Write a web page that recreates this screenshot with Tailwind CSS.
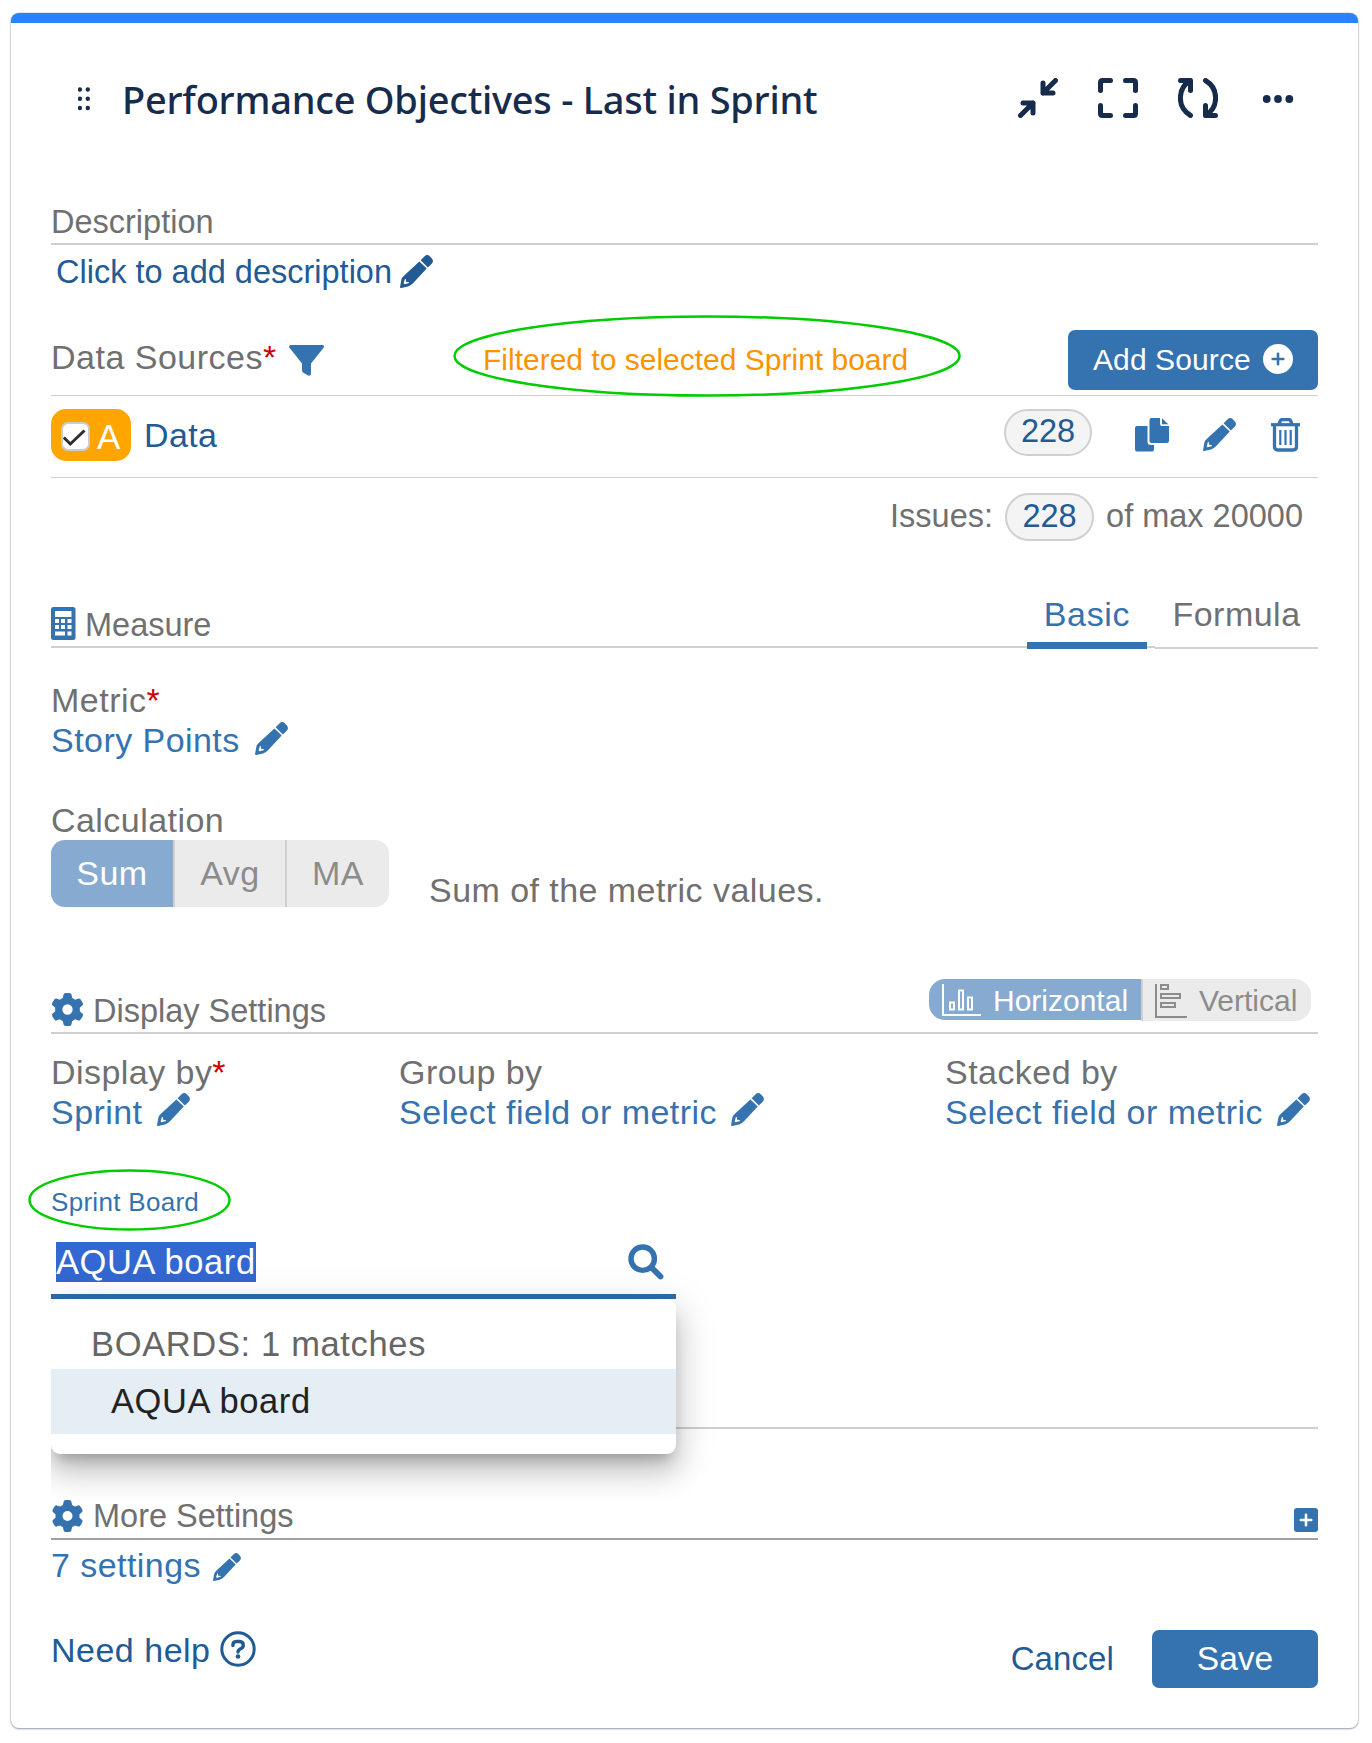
<!DOCTYPE html>
<html lang="en">

<head>
  <meta charset="UTF-8" />
  <meta name="viewport" content="width=device-width, initial-scale=1.0" />
  <title>Performance Objectives - Last in Sprint</title>
  <script src="https://cdn.jsdelivr.net/npm/@tailwindcss/browser@4"></script>
</head>

<body class="bg-white min-h-screen">
  <!-- Shared icons -->
  <svg class="hidden">
    <symbol id="pencil" viewBox="0 0 33 33">
      <path d="M20.6 5.2 24.4 1.4Q27.2-1.2 30 1.4L31.7 3.2Q34.2 6 31.7 8.8L27.9 12.5Z" />
      <path fill-rule="evenodd" d="M19.400 6.400 26.700 13.600 13 28.300Q10.500 30.700 8 31.400L1.2 32.9Q-.2 33.1.1 31.8L1.3 25Q2 22.400 4.200 20.600ZM5 23.8 3.6 28.6 4.6 29.3 9.2 27.9 8.4 26.9 6 26.8 6 24.4Z" />
    </symbol>
    <symbol id="gear" viewBox="0 0 512 512">
      <path d="M495.900 166.600c3.200 8.700.5 18.400-6.400 24.600l-43.300 39.400c1.100 8.300 1.700 16.800 1.700 25.400s-.6 17.100-1.700 25.400l43.300 39.400c6.900 6.200 9.600 15.900 6.400 24.600c-4.400 11.900-9.700 23.300-15.800 34.300l-4.700 8.100c-6.600 11-14 21.400-22.100 31.200c-5.900 7.200-15.700 9.600-24.500 6.800l-55.700-17.700c-13.400 10.300-28.200 18.900-44 25.400l-12.500 57.100c-2 9.100-9 16.300-18.200 17.800c-13.800 2.300-28 3.500-42.500 3.500s-28.700-1.200-42.500-3.500c-9.200-1.500-16.200-8.700-18.200-17.800l-12.500-57.100c-15.800-6.500-30.600-15.100-44-25.400L83.100 425.900c-8.800 2.800-18.600.3-24.500-6.800c-8.100-9.800-15.500-20.200-22.100-31.200l-4.700-8.100c-6.100-11-11.400-22.400-15.800-34.300c-3.200-8.700-.5-18.400 6.400-24.600l43.300-39.400C64.600 273.100 64 264.600 64 256s.6-17.100 1.700-25.400L22.400 191.200c-6.900-6.200-9.600-15.900-6.400-24.600c4.400-11.900 9.700-23.300 15.800-34.300l4.700-8.100c6.600-11 14-21.400 22.100-31.200c5.900-7.200 15.700-9.600 24.500-6.800l55.700 17.700c13.400-10.300 28.200-18.900 44-25.400l12.500-57.100c2-9.100 9-16.300 18.200-17.800C227.300 1.200 241.500 0 256 0s28.700 1.200 42.500 3.500c9.200 1.500 16.200 8.700 18.200 17.800l12.500 57.100c15.800 6.500 30.600 15.100 44 25.400l55.700-17.700c8.800-2.800 18.600-.3 24.500 6.800c8.100 9.800 15.500 20.200 22.100 31.200l4.700 8.100c6.100 11 11.400 22.400 15.800 34.300zM256 336a80 80 0 1 0 0-160 80 80 0 1 0 0 160z" />
    </symbol>
  </svg>

  <div class="pt-[13px] pl-[11px]">
    <div class="w-[1347px] h-[1715px] rounded-lg overflow-hidden bg-white border-t-10 border-[#2684ff] shadow-[0_1px_2px_#091e4260,0_0_1px_1px_#091e4218] px-10 text-[34px] leading-10 text-[#707070] font-['Liberation_Sans',Arial,sans-serif] whitespace-nowrap">

      <!-- Header -->
      <div class="mt-[53px] h-11 flex items-center text-[#172b4d]">
        <svg class="w-3 h-6 ml-[27px] mt-[1px]" viewBox="0 0 12 24" fill="currentColor">
          <circle cx="1.900" cy="2.500" r="2.200" /><circle cx="9.800" cy="2.500" r="2.200" />
          <circle cx="1.900" cy="11.800" r="2.200" /><circle cx="9.800" cy="11.800" r="2.200" />
          <circle cx="1.900" cy="21" r="2.200" /><circle cx="9.800" cy="21" r="2.200" />
        </svg>
        <h1 class="ml-8 mt-[2px] text-[38px] font-medium tracking-[-0.250px] font-['Noto_Sans','Open_Sans',sans-serif]">Performance Objectives - Last in Sprint</h1>
        <div class="ml-auto mr-5 flex items-center gap-10">
          <svg class="w-10 h-10" viewBox="0 0 40 40" fill="none" stroke="currentColor" stroke-width="5" stroke-linecap="round" stroke-linejoin="round">
            <path d="M37.500 2.500 25 15M25 5V15H35M2.500 37.500 15 25M5 25H15V35" />
          </svg>
          <svg class="w-10 h-10" viewBox="0 0 40 40" fill="none" stroke="currentColor" stroke-width="5" stroke-linecap="round" stroke-linejoin="round">
            <path d="M12.500 2.500H4.500Q2.500 2.500 2.500 4.500V12.500M27.500 2.500H35.500Q37.500 2.500 37.500 4.500V12.500M2.500 27.500V35.500Q2.500 37.500 4.500 37.500H12.500M37.500 27.500V35.500Q37.500 37.500 35.500 37.500H27.500" />
          </svg>
          <svg class="w-10 h-10" viewBox="0 0 40 40" fill="none" stroke="currentColor" stroke-width="5" stroke-linecap="round" stroke-linejoin="round">
            <path d="M2.500 2.500H12.500V12.500M12.500 2.500C-.5 10-1.500 29 12.500 37.500M37.500 37.500H27.500V27.500M27.500 37.500C40.500 30 41.500 11 27.500 2.500" />
          </svg>
          <svg class="w-10 h-10" viewBox="0 0 40 40" fill="currentColor">
            <circle cx="8.700" cy="21" r="3.900" /><circle cx="20" cy="21" r="3.900" /><circle cx="31.300" cy="21" r="3.900" />
          </svg>
        </div>
      </div>

      <!-- Description -->
      <div class="mt-[81px] h-11 border-b-2 border-[#d0d0d0] pt-px text-[32.5px]">Description</div>
      <div class="mt-[7px] h-10 pl-[5px] flex text-[32.5px] text-[#225a94]">
        <span>Click to add description</span>
        <svg class="w-[33px] h-[33px] ml-2 mt-[3px]" fill="currentColor"><use href="#pencil" /></svg>
      </div>

      <!-- Data sources -->
      <div class="relative mt-[38px] h-[66px] border-b border-[#d0d0d0] flex items-start">
        <span class="mt-[7px] tracking-[0.500px]">Data Sources<span class="text-[#cc0000]">*</span></span>
        <svg class="w-[35px] h-[31px] ml-3 mt-[15px]" viewBox="0 0 35 31" fill="#3572b0">
          <path d="M1.500 0H33.500Q35.500.5 34.800 2.500L22 18.500V29Q21.500 31 19.500 30.800L14 27.500Q13 26.500 13 25.500V18.500L.3 2.500Q-.4.8 1.500 0Z" />
        </svg>
        <span class="absolute left-[432px] top-[10px] text-[30px] text-[#fa9300]">Filtered to selected Sprint board</span>
        <svg class="absolute left-[402px] top-[-15px] w-[508px] h-[82px]" viewBox="0 0 508 82" fill="none" stroke="#00cc00" stroke-width="2.500">
          <ellipse cx="254" cy="41" rx="252.500" ry="39.500" />
        </svg>
        <button class="ml-auto w-[250px] h-[60px] rounded-[7px] bg-[#3572b0] text-white text-[30px] flex items-center pl-[25px]">
          <span class="tracking-[0.1px]">Add Source</span>
          <svg class="w-[30px] h-[30px] ml-3 mt-[-2px]" viewBox="0 0 30 30">
            <circle cx="15" cy="15" r="15" fill="white" />
            <path d="M15 9.700V20.300M9.700 15H20.300" stroke="#3572b0" stroke-width="2.600" stroke-linecap="round" />
          </svg>
        </button>
      </div>

      <div class="h-[82px] border-b border-[#d0d0d0] flex items-start text-[#225a94]">
        <div class="mt-[13px] w-20 h-[52px] rounded-[15px] bg-[#ffa500] flex items-center pl-[10px] text-white">
          <div class="w-[29px] h-[29px] mt-[3px] rounded-[7px] border-2 border-[#ccc] bg-white">
            <svg class="w-[25px] h-[25px]" viewBox="0 0 25 25" fill="none" stroke="#2b2d31" stroke-width="3"><path d="M.8 13.500 7.300 20 21.500 6.500" /></svg>
          </div>
          <span class="ml-[7px] mt-[3px] text-[35px]">A</span>
        </div>
        <span class="ml-[13px] mt-[19px] tracking-[0.400px]">Data</span>
        <span class="ml-auto mt-[13px] w-[88px] h-[47px] rounded-full border-2 border-[#d0d0d0] bg-[#f4f4f4] text-center text-[32.5px] leading-[41px]">228</span>
        <svg class="w-[34px] h-[34px] ml-[43px] mt-[22px]" viewBox="0 0 34 34" fill="#3572b0">
          <path d="M2 8H12.500V23.500Q12.500 27 16 27H19V31.500Q19 33.500 17 33.500H2Q0 33.500 0 31.500V10Q0 8 2 8Z" />
          <path d="M16.500 0H25V6Q25 8 27 8H34V23Q34 25 32 25H16.500Q14.500 25 14.500 23V2Q14.500 0 16.500 0ZM27 .3 33.300 6.300H27Z" />
        </svg>
        <svg class="w-[33px] h-[33px] ml-[34px] mt-[22px]" fill="#3572b0"><use href="#pencil" /></svg>
        <svg class="w-[29px] h-[34px] ml-[35px] mr-[18px] mt-[22px]" viewBox="0 0 29 34" fill="none" stroke="#3572b0">
          <path d="M0 6.700H29" stroke-width="3.200" />
          <path d="M8 6 9.500 2.500Q10 1.500 11 1.500H18Q19 1.500 19.500 2.500L21 6M3.500 7V28.500Q3.500 32 7 32H22Q25.500 32 25.500 28.500V7" stroke-width="3.300" />
          <path d="M9.300 12V27M14.500 12V27M19.700 12V27" stroke-width="2.200" />
        </svg>
      </div>

      <div class="mt-[15px] h-12 flex items-start justify-end text-[32.5px] pr-[15px]">
        <span class="mt-[3px]">Issues:</span>
        <span class="ml-[12px] w-[89px] h-12 rounded-full border-2 border-[#d0d0d0] bg-[#f4f4f4] text-center text-[32.5px] leading-[42px] text-[#225a94]">228</span>
        <span class="ml-[12px] mt-[3px]">of max 20000</span>
      </div>

      <!-- Measure -->
      <div class="mt-[53px] h-[55px] flex items-start">
        <div class="flex-1 h-[54px] border-b-2 border-[#d0d0d0] flex pt-[11px]">
          <svg class="w-[25px] h-[33px] mt-[2px]" viewBox="0 0 25 33">
            <rect width="24.500" height="33" rx="2.500" fill="#3572b0" />
            <path fill="white" d="M4 4H20.500V10H4ZM4 12H8V16H4ZM10 12H14V16H10ZM16.500 12H20.500V16H16.500ZM4 18H8V22H4ZM10 18H14V22H10ZM16.500 18H20.500V22H16.500ZM4 24.500H14V28.500H4ZM16.500 24.500H20.500V28.500H16.500Z" />
          </svg>
          <span class="ml-[9px] text-[32.5px]">Measure</span>
        </div>
        <div class="w-[120px] h-[55px] border-b-7 border-[#3572b0] text-[#3572b0] text-center tracking-[0.700px]">Basic</div>
        <div class="w-2 h-[54px] border-b-2 border-[#d0d0d0]"></div>
        <div class="w-[163px] h-[55px] border-b-2 border-[#d0d0d0] text-center tracking-[0.500px]">Formula</div>
      </div>

      <div class="mt-[31px] h-10 tracking-[0.500px]">Metric<span class="text-[#cc0000]">*</span></div>
      <div class="h-[41px] flex text-[#3572b0] tracking-[0.450px]">
        <span>Story Points</span>
        <svg class="w-[33px] h-[33px] ml-[15px] mt-[2px]" fill="currentColor"><use href="#pencil" /></svg>
      </div>

      <div class="mt-[39px] h-10 tracking-[0.450px]">Calculation</div>
      <div class="h-[67px] flex tracking-[0.450px]">
        <div class="flex w-[338px] rounded-[14px] overflow-hidden bg-[#ebebeb] text-[#8c8c8c] text-center leading-[66px]">
          <span class="w-[122px] bg-[#87aad0] text-white">Sum</span>
          <span class="w-[112px] border-l-2 border-[#d0d0d0]">Avg</span>
          <span class="w-[104px] border-l-2 border-[#d0d0d0]">MA</span>
        </div>
        <span class="ml-10 mt-[30px]">Sum of the metric values.</span>
      </div>

      <!-- Display settings -->
      <div class="mt-[72px] h-[55px] border-b-2 border-[#d0d0d0] flex items-start">
        <svg class="w-[33px] h-[33px] mt-[14px]" fill="#3572b0"><use href="#gear" /></svg>
        <span class="ml-[9px] mt-3 text-[32.5px]">Display Settings</span>
        <div class="ml-auto mr-[7px] flex text-[30px] leading-[43px]">
          <div class="w-[212px] h-[41px] rounded-l-[16px] bg-[#87aad0] text-white flex pl-[13px]">
            <svg class="w-[39px] h-8 mt-[5px]" viewBox="0 0 39 32" fill="none" stroke="currentColor" stroke-width="2">
              <path d="M1 0V31H39M8 18.500H12V25.500H8ZM17 6.500H21V25.500H17ZM26 13.500H30V25.500H26Z" />
            </svg>
            <span class="ml-[12px]">Horizontal</span>
          </div>
          <div class="w-[170px] h-[42px] rounded-r-[16px] bg-[#ebebeb] text-[#8c8c8c] border-l-2 border-[#d0d0d0] flex pl-3">
            <svg class="w-8 h-[34px] mt-[5px]" viewBox="0 0 32 34" fill="none" stroke="currentColor" stroke-width="2">
              <path d="M1 0V33H32M6 1H13V5H6ZM6 10H25V14H6ZM6 19H20V23H6Z" />
            </svg>
            <span class="ml-[12px]">Vertical</span>
          </div>
        </div>
      </div>

      <div class="mt-[18px] grid grid-cols-[348px_546px_1fr] tracking-[0.450px]">
        <div>
          <div>Display by<span class="text-[#cc0000]">*</span></div>
          <div class="h-[41px] flex text-[#3572b0]">
            <span>Sprint</span>
            <svg class="w-[33px] h-[33px] ml-[14px] mt-[1px]" fill="currentColor"><use href="#pencil" /></svg>
          </div>
        </div>
        <div>
          <div>Group by</div>
          <div class="h-[41px] flex text-[#3572b0]">
            <span>Select field or metric</span>
            <svg class="w-[33px] h-[33px] ml-[14px] mt-[1px]" fill="currentColor"><use href="#pencil" /></svg>
          </div>
        </div>
        <div>
          <div>Stacked by</div>
          <div class="h-[41px] flex text-[#3572b0]">
            <span>Select field or metric</span>
            <svg class="w-[33px] h-[33px] ml-[14px] mt-[1px]" fill="currentColor"><use href="#pencil" /></svg>
          </div>
        </div>
      </div>

      <!-- Sprint board picker -->
      <div class="relative z-10 mt-[49px] h-10 text-[26px] text-[#3572b0] tracking-[0.300px]">
        Sprint Board
        <svg class="absolute left-[-23px] top-[-13px] w-[203px] h-[62px]" viewBox="0 0 203 62" fill="none" stroke="#00cc00" stroke-width="2.500">
          <ellipse cx="101.500" cy="31" rx="100" ry="29.500" />
        </svg>
      </div>
      <div class="relative h-[282px] overflow-hidden">
        <div class="w-[625px] h-[77px] border-b-5 border-[#2f6ca8] flex items-start pt-5 pl-[5px]">
          <span class="w-[200px] h-10 bg-[#3367d1] text-white text-[34.5px] tracking-[0.600px]">AQUA board</span>
          <svg class="w-9 h-9 ml-auto mr-3 mt-[2px]" viewBox="0 0 36 36" fill="none" stroke="#3572b0">
            <circle cx="14.700" cy="14.700" r="11.700" stroke-width="5.400" />
            <path d="M23.500 23.500 32.500 32.500" stroke-width="5.800" stroke-linecap="round" />
          </svg>
        </div>
        <div class="mt-32 border-t-2 border-[#d0d0d0]"></div>
        <div class="absolute left-0 top-[77px] w-[625px] h-[155px] rounded-[9px] bg-white pt-[25px] shadow-[0_10px_14px_-6px_#00000040,0_18px_28px_2px_#00000028,0_8px_40px_6px_#0000001a]">
          <div class="h-[45px] pl-10 text-[#666] text-[34.5px] tracking-[0.650px]">BOARDS: 1 matches</div>
          <div class="h-[65px] pl-[60px] pt-3 bg-[#e5edf5] text-[#222] text-[34.5px] tracking-[0.600px]">AQUA board</div>
        </div>
      </div>

      <!-- More settings -->
      <div class="relative -mt-2 h-11 border-b-2 border-[#a0a0a0] flex items-start">
        <svg class="w-[33px] h-8 mt-1" fill="#3572b0"><use href="#gear" /></svg>
        <span class="ml-[9px] text-[32.5px]">More Settings</span>
        <svg class="w-6 h-6 ml-auto mt-3" viewBox="0 0 24 24">
          <rect width="24" height="24" rx="3" fill="#3572b0" />
          <path d="M12 6.800V17.200M6.800 12H17.200" stroke="white" stroke-width="2.600" stroke-linecap="round" />
        </svg>
      </div>
      <div class="mt-[5px] h-[41px] flex text-[#3572b0] tracking-[0.450px]">
        <span>7 settings</span>
        <svg class="w-7 h-7 ml-[12px] mt-[8px]" fill="currentColor"><use href="#pencil" /></svg>
      </div>

      <!-- Footer -->
      <div class="mt-11 h-[58px] flex items-center text-[#225a94]">
        <span class="mb-[18px] tracking-[0.500px]">Need help</span>
        <svg class="w-9 h-9 ml-[9px] mb-[20px]" viewBox="0 0 36 36" fill="none" stroke="currentColor" stroke-width="3">
          <circle cx="18" cy="18" r="16.200" />
          <path d="M12.900 14.500V14Q13 10.600 16.300 10.500H19.500Q23.300 10.800 23.300 14.200 23.300 16.300 21 17.500 18 18.800 18 21" stroke-width="3.400" stroke-linecap="round" />
          <circle cx="18" cy="25.500" r="2.300" fill="currentColor" stroke="none" />
        </svg>
        <span class="ml-auto text-[33px] tracking-[0.100px]">Cancel</span>
        <button class="ml-[38px] w-[166px] h-[58px] rounded-[7px] bg-[#3572b0] text-white text-[33.5px]">Save</button>
      </div>
    </div>
  </div>
</body>

</html>
